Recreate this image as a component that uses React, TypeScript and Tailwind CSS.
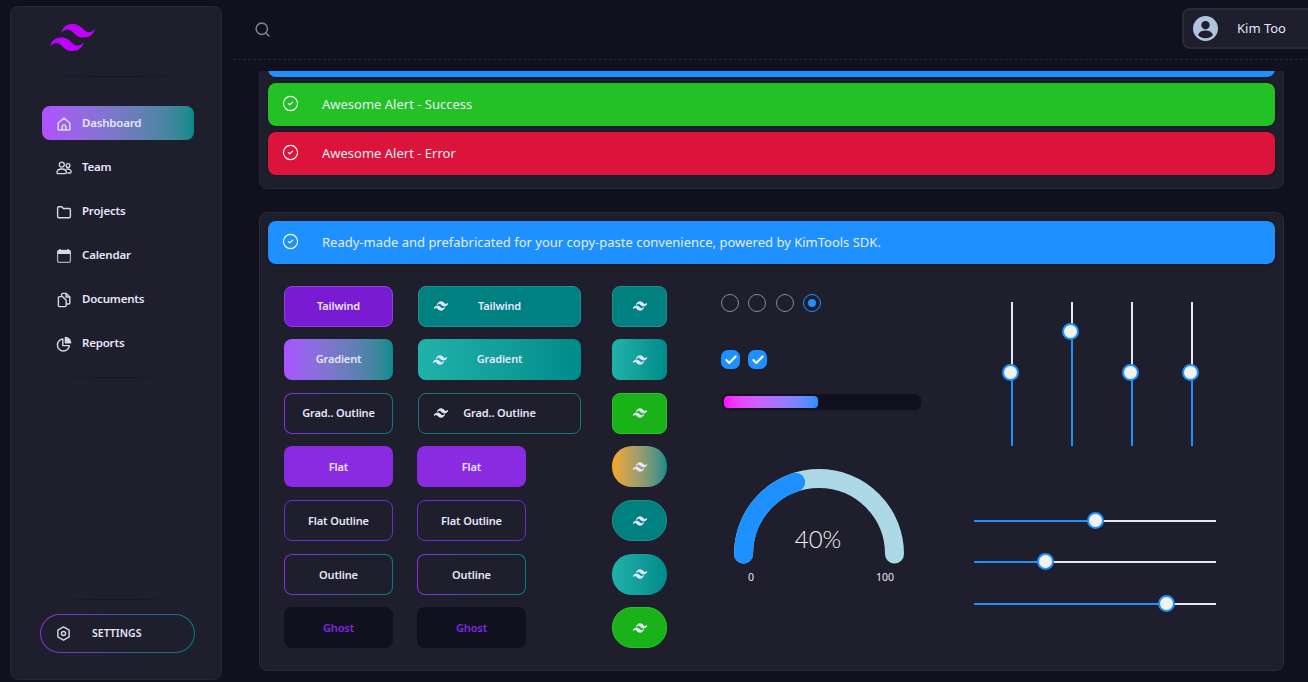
import React from "react";
import { Search, CircleCheck, Check } from "lucide-react";

const TW_PATH =
  "M12.001,4.8c-3.2,0-5.2,1.6-6,4.8c1.2-1.6,2.6-2.2,4.2-1.8c0.913,0.228,1.565,0.89,2.288,1.624 C13.666,10.618,15.027,12,18.001,12c3.2,0,5.2-1.6,6-4.8c-1.2,1.6-2.6,2.2-4.2,1.8c-0.913-0.228-1.565-0.89-2.288-1.624 C16.337,6.182,14.976,4.8,12.001,4.8z M6.001,12c-3.2,0-5.2,1.6-6,4.8c1.2-1.6,2.6-2.2,4.2-1.8c0.913,0.228,1.565,0.89,2.288,1.624 c1.177,1.194,2.538,2.576,5.512,2.576c3.2,0,5.2-1.6,6-4.8c-1.2,1.6-2.6,2.2-4.2,1.8c-0.913-0.228-1.565-0.89-2.288-1.624 C10.337,13.382,8.976,12,6.001,12z";

function TwLogo({ className, bold }: { className: string; bold?: boolean }) {
  return (
    <svg viewBox="0 0 24 24" className={className} fill="currentColor" stroke={bold ? "currentColor" : "none"} strokeWidth={bold ? 1.5 : 0}>
      <path d={TW_PATH} />
    </svg>
  );
}

const sv = { fill: "none", stroke: "currentColor", strokeWidth: 1.6, strokeLinecap: "round" as const, strokeLinejoin: "round" as const };

function HomeI() {
  return (
    <svg viewBox="0 0 16 16" className="w-4 h-4" {...sv}>
      <path d="M2.2 7 8 2.2 13.8 7v6.2a.8.8 0 0 1-.8.8H3a.8.8 0 0 1-.8-.8Z" />
      <path d="M6.2 14v-3.2a1.8 1.8 0 0 1 3.6 0V14" />
    </svg>
  );
}
function TeamI() {
  return (
    <svg viewBox="0 0 16 16" className="w-4 h-4" {...sv} strokeWidth={1.3}>
      <circle cx="5.8" cy="4.6" r="2.5" />
      <circle cx="12" cy="5.6" r="1.9" />
      <path d="M1 12.6c0-2.4 2-3.6 4.8-3.6s4.6 1.2 4.6 3.6c0 .7-.5 1-1.2 1H2.2c-.7 0-1.2-.3-1.2-1Z" />
      <path d="M10.6 9.2c2.6-.6 4.6.4 4.6 2.6 0 .7-.4 1.2-1.2 1.2h-2.2" />
    </svg>
  );
}
function FolderI() {
  return (
    <svg viewBox="0 0 16 16" className="w-4 h-4" {...sv} strokeWidth={1.4}>
      <path d="M1.6 4a1.2 1.2 0 0 1 1.2-1.2h3l1.6 1.7h5.8a1.2 1.2 0 0 1 1.2 1.2v6.9a1.2 1.2 0 0 1-1.2 1.2H2.8a1.2 1.2 0 0 1-1.2-1.2Z" />
    </svg>
  );
}
function CalendarI() {
  return (
    <svg viewBox="0 0 16 16" className="w-4 h-4">
      <path d="M4 1v2M12 1v2" stroke="currentColor" strokeWidth="1.4" />
      <rect x="1.6" y="2.4" width="12.8" height="12" rx="1.6" fill="none" stroke="currentColor" strokeWidth="1.3" opacity=".75" />
      <path d="M1.4 3.6a1.6 1.6 0 0 1 1.6-1.6h10a1.6 1.6 0 0 1 1.6 1.6V6H1.4Z" fill="currentColor" />
    </svg>
  );
}
function DocsI() {
  return (
    <svg viewBox="0 0 16 16" className="w-4 h-4" {...sv} strokeWidth={1.4}>
      <path d="M5.6 3.6V2.4a1 1 0 0 1 1-1h3.6l3.6 3.6v6a1 1 0 0 1-1 1h-1.8" />
      <path d="M10 1.6V5h3.6" />
      <path d="M2.4 5.6a1 1 0 0 1 1-1h3l3.8 3.6v5.4a1 1 0 0 1-1 1H3.4a1 1 0 0 1-1-1Z" />
    </svg>
  );
}
function PieI() {
  return (
    <svg viewBox="0 0 16 16" className="w-4 h-4" {...sv} strokeWidth={1.4}>
      <path d="M6.8 3a6 6 0 1 0 6.6 6.6H6.8Z" />
      <path d="M9.4 1.4a5.4 5.4 0 0 1 5.2 5.4H9.4Z" fill="currentColor" />
    </svg>
  );
}
function HexI() {
  return (
    <svg viewBox="0 0 16 16" className="w-[15px] h-[15px]" {...sv} strokeWidth={1.5}>
      <path d="M8 1 14 4.4v7.2L8 15l-6-3.4V4.4Z" />
      <circle cx="8" cy="8" r="2.2" />
    </svg>
  );
}

const nav: [string, React.ReactNode][] = [
  ["Dashboard", <HomeI />],
  ["Team", <TeamI />],
  ["Projects", <FolderI />],
  ["Calendar", <CalendarI />],
  ["Documents", <DocsI />],
  ["Reports", <PieI />],
];

function Divider({ className }: { className: string }) {
  return <div className={"h-px bg-gradient-to-r from-transparent via-[#15151f] to-transparent " + className} />;
}

function Sidebar() {
  return (
    <aside className="mt-[6px] ml-[10px] flex h-[674px] w-[212px] shrink-0 flex-col rounded-lg border border-[#26263a] bg-[#1e1e2d]">
      <div className="h-[69px] pl-[39px] pt-[8px] text-[#c000ff]">
        <TwLogo className="h-[45px] w-[45px]" />
      </div>
      <Divider className="mx-[24px]" />
      <nav className="mt-[29px] flex flex-col gap-[10px] pl-[31px]">
        {nav.map(([label, icon], i) => (
          <div
            key={label}
            className={
              "flex h-[34px] w-[152px] items-center rounded-lg pl-[14px] text-[11.5px] font-semibold tracking-[-0.2px] " +
              (i === 0
                ? "bg-gradient-to-r from-[#b050ff] to-[#008b8b] text-[#e6e6fa]"
                : "text-[#e6e6fa]")
            }
          >
            <span className="mt-[1px] flex w-[26px] shrink-0 text-[#d8d8e4]">{icon}</span>
            <span className={i === 0 ? "" : "-mt-[1px]"}>{label}</span>
          </div>
        ))}
      </nav>
      <Divider className="mx-[42px] mt-[17px]" />
      <div className="flex-1" />
      <Divider className="mx-[42px]" />
      <div className="mb-[26px] ml-[29px] mt-[14px] flex h-[39px] w-[155px] items-center rounded-[20px] border border-transparent pl-[15px] text-[10.5px] font-semibold text-[#e6e6fa] [background:linear-gradient(#1e1e2d,#1e1e2d)_padding-box,linear-gradient(90deg,#8a2be2,#008080)_border-box]">
        <span className="flex w-[36px] text-[#d8d8e4]"><HexI /></span>
        SETTINGS
      </div>
    </aside>
  );
}

function Header() {
  return (
    <header className="flex h-[60px] items-start justify-between border-b border-dashed border-[#262635] pl-[21px]">
      <Search className="mt-[21px] h-[17px] w-[17px] text-[#7a8290]" strokeWidth={2.2} />
      <div className="-mr-[14px] mt-[8px] flex h-[41px] w-[140px] shrink-0 items-center rounded-lg border-2 border-[#2a2a3a] bg-[#1e1e2d] pl-[9px]">
        <svg viewBox="0 0 24 24" className="h-[25px] w-[25px]">
          <circle cx="12" cy="12" r="12" fill="#b0c4de" />
          <circle cx="12" cy="8.8" r="4" fill="#1e1e2d" />
          <path d="M4.8 18.2c1-2.8 3.8-4.2 7.2-4.2s6.2 1.4 7.2 4.2a10 10 0 0 1-14.4 0Z" fill="#1e1e2d" />
        </svg>
        <span className="ml-[19px] text-[13px] text-[#e6e6fa]">Kim Too</span>
      </div>
    </header>
  );
}

function Alert({ color, text }: { color: string; text?: string }) {
  return (
    <div className={"flex h-[43px] items-center rounded-lg pl-[14px] text-[13px] text-[#e8eef8] shadow-[0_0_3px_rgba(0,0,0,0.35)] " + color}>
      {text && <CircleCheck className="-mt-[2px] h-[17px] w-[17px] shrink-0 text-white" strokeWidth={1.6} />}
      {text && <span className="ml-[23px]">{text}</span>}
    </div>
  );
}

const BASE = "flex h-[41px] items-center justify-center rounded-lg text-[11px] font-semibold tracking-[-0.15px]";

const S = {
  tailwind: "bg-[#7a1bd4] border border-[#8e3fe0] text-[#e6e6fa]",
  gradient: "bg-gradient-to-r from-[#a855ff] to-[#008b8b] text-[#e6e6fa]",
  gradOutline: "border border-transparent text-[#e6e6fa] [background:linear-gradient(#1e1e2d,#1e1e2d)_padding-box,linear-gradient(90deg,#8a2be2,#008080)_border-box]",
  flat: "bg-[#8a2be2] text-[#e6e6fa]",
  flatOutline: "border border-[#7428c8] text-[#e6e6fa] pt-[2px]",
  ghost: "bg-[#10101e] text-[#8426e6]",
  teal: "bg-[#008080] border border-[#1f8f8f]",
  seaGrad: "bg-gradient-to-r from-[#20b2aa] to-[#008b8b]",
  tealOutline: "border border-[#0f7a7c]",
  green: "bg-[#19b319] border border-[#2bc02b]",
  amber: "bg-gradient-to-r from-[#f5a623] to-[#008b8b]",
};

function IconBtn({ label, style }: { label: string; style: string }) {
  return (
    <div className={"grid h-[41px] grid-cols-[1fr_auto_1fr] items-center rounded-lg px-[15px] text-[11px] font-semibold tracking-[-0.15px] text-[#e6e6fa] " + style}>
      <TwLogo className="h-[14px] w-[14px] text-[#e6e6fa]" bold />
      <span>{label}</span>
      <span />
    </div>
  );
}

function Square({ style, round }: { style: string; round?: boolean }) {
  return (
    <div className={"flex h-[41px] w-[55px] items-center justify-center text-[#e6e6fa] " + (round ? "rounded-[20px] " : "rounded-lg ") + style}>
      <TwLogo className="h-[14px] w-[14px]" bold />
    </div>
  );
}

const col1: [string, string][] = [
  ["Tailwind", S.tailwind],
  ["Gradient", S.gradient],
  ["Grad.. Outline", S.gradOutline],
  ["Flat", S.flat],
  ["Flat Outline", S.flatOutline],
  ["Outline", S.gradOutline + " pt-[2px]"],
  ["Ghost", S.ghost],
];

function Gauge() {
  const cx = 85, cy = 85, r = 75.5;
  const a = (72 * Math.PI) / 180;
  const ex = cx - r * Math.cos(a);
  const ey = cy - r * Math.sin(a);
  return (
    <svg width="172" height="120" viewBox="0 0 172 120" className="mt-[59px] ml-[13px] block">
      <path d={`M${cx - r} ${cy} A${r} ${r} 0 0 1 ${cx + r} ${cy}`} fill="none" stroke="#add8e6" strokeWidth="19" strokeLinecap="round" />
      <path d={`M${cx - r} ${cy} A${r} ${r} 0 0 1 ${ex} ${ey}`} fill="none" stroke="#1e90ff" strokeWidth="19" strokeLinecap="round" />
      <text x="84" y="79" textAnchor="middle" fontSize="24" fontWeight="300" fill="#f2f2f2" fontFamily="Lato, sans-serif">40%</text>
      <text x="17" y="112" textAnchor="middle" fontSize="10.5" fill="#e6e6fa" fontFamily="Noto Sans, sans-serif">0</text>
      <text x="151" y="112" textAnchor="middle" fontSize="10.5" fill="#e6e6fa" fontFamily="Noto Sans, sans-serif">100</text>
    </svg>
  );
}

function Radio({ on }: { on?: boolean }) {
  return (
    <span className={"flex h-[18px] w-[18px] items-center justify-center rounded-full border " + (on ? "border-[#1e90ff]" : "border-[#8a8a8f]")}>
      {on && <span className="h-[8px] w-[8px] rounded-full bg-[#1e90ff]" />}
    </span>
  );
}

function CheckBox() {
  return (
    <span className="flex h-[19px] w-[19px] items-center justify-center rounded-[7px] bg-[#1e90ff]">
      <Check className="h-[14px] w-[14px] text-white" strokeWidth={3.5} />
    </span>
  );
}

const THUMB = "absolute h-[17px] w-[17px] rounded-full border-2 border-[#1e90ff] bg-[#f2f2f2]";

function VSlider({ top }: { top: number }) {
  return (
    <div className="relative h-[144px] w-[2px] bg-[#dfe9f8]">
      <div className="absolute bottom-0 w-full bg-[#1e90ff]" style={{ height: `${144 - top}px` }} />
      <div className={THUMB + " -left-[9px]"} style={{ top: `${top - 8}px` }} />
    </div>
  );
}

function HSlider({ left, className }: { left: number; className?: string }) {
  return (
    <div className={"relative h-[2px] w-[242px] bg-[#dfe9f8] " + (className ?? "")}>
      <div className="absolute left-0 h-full bg-[#1e90ff]" style={{ width: `${left}px` }} />
      <div className={THUMB + " -top-[8px]"} style={{ left: `${left - 8}px` }} />
    </div>
  );
}

function Widgets() {
  return (
    <div className="mt-[21.5px] flex">
      <div className="ml-[24px] flex w-[109px] flex-col gap-[12.67px]">
        {col1.map(([l, s]) => (
          <div key={l} className={BASE + " " + s}>{l}</div>
        ))}
      </div>
      <div className="ml-[24px] flex w-[164px] flex-col items-start gap-[12.67px]">
        <div className="ml-px w-[163px]"><IconBtn label="Tailwind" style={S.teal} /></div>
        <div className="ml-px w-[163px]"><IconBtn label="Gradient" style={S.seaGrad} /></div>
        <div className="ml-px w-[163px]"><IconBtn label="Grad.. Outline" style={S.tealOutline} /></div>
        {col1.slice(3).map(([l, s]) => (
          <div key={l} className={"w-[109px] " + BASE + " " + s}>{l}</div>
        ))}
      </div>
      <div className="ml-[31px] flex w-[55px] flex-col gap-[12.67px]">
        <Square style={S.teal} />
        <Square style={S.seaGrad} />
        <Square style={S.green} />
        <Square style={S.amber} round />
        <Square style={S.teal} round />
        <Square style={S.seaGrad} round />
        <Square style={S.green} round />
      </div>
      <div className="ml-[54px] w-[200px]">
        <div className="mt-[8.5px] flex gap-[9.3px]">
          <Radio /><Radio /><Radio /><Radio on />
        </div>
        <div className="mt-[38px] flex gap-[8px]">
          <CheckBox /><CheckBox />
        </div>
        <div className="ml-px mt-[25px] h-[16px] w-[199px] rounded-md bg-[#10101e] p-[2px]">
          <div className="h-full w-[94px] rounded bg-gradient-to-r from-[#ff00ff] to-[#1e90ff]" />
        </div>
        <Gauge />
      </div>
      <div className="ml-[53px] w-[242px]">
        <div className="ml-[37px] mt-[16.5px] flex gap-[58px]">
          <VSlider top={70} />
          <VSlider top={29} />
          <VSlider top={70} />
          <VSlider top={70} />
        </div>
        <div className="mt-[74px] flex flex-col">
          <HSlider left={121} />
          <HSlider left={71} className="mt-[39px]" />
          <HSlider left={192} className="mt-[40px]" />
        </div>
      </div>
    </div>
  );
}

export default function App() {
  return (
    <div className="flex h-[682px] w-[1308px] overflow-hidden bg-[#10101e] font-['Noto_Sans','Open_Sans',sans-serif]">
      <Sidebar />
      <main className="ml-[11px] flex h-full flex-1 flex-col overflow-hidden">
        <Header />
        <div className="mt-[11px] flex-1 overflow-hidden pl-[26px] pr-[24px]">
          <div className="-mt-[46px] flex flex-col gap-[6px] rounded-lg border border-[#26263a] bg-[#1e1e2d] p-[8px] pb-[13px]">
            <Alert color="bg-[#1e90ff]" />
            <Alert color="bg-[#23c026]" text="Awesome Alert - Success" />
            <Alert color="bg-[#dc143c]" text="Awesome Alert - Error" />
          </div>
          <div className="mt-[23px] h-[459px] rounded-lg border border-[#2a2a3a] bg-[#1e1e2d]">
            <div className="p-[8px] pb-0">
              <Alert color="bg-[#1e90ff]" text="Ready-made and prefabricated for your copy-paste convenience, powered by KimTools SDK." />
            </div>
            <Widgets />
          </div>
        </div>
      </main>
    </div>
  );
}
